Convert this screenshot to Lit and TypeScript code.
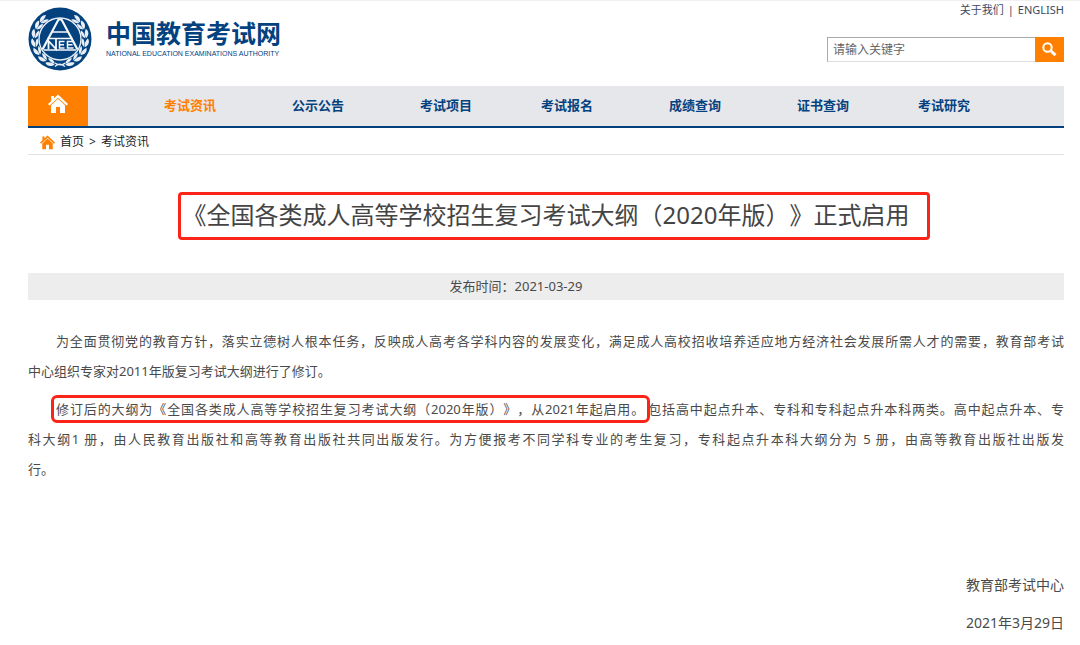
import { LitElement, html, css, svg } from "lit";
import { customElement } from "lit/decorators.js";

interface NavItem {
  label: string;
  active?: boolean;
}

const NAV: NavItem[] = [
  { label: "考试资讯", active: true },
  { label: "公示公告" },
  { label: "考试项目" },
  { label: "考试报名" },
  { label: "成绩查询" },
  { label: "证书查询" },
  { label: "考试研究" },
];

const LEAF_ANGLES = [14, 34, 54, 74, 94, 114, 132];

@customElement("site-emblem")
export class SiteEmblem extends LitElement {
  static styles = css`
    :host {
      display: block;
      width: 64px;
      height: 64px;
    }
    svg {
      display: block;
      width: 100%;
      height: 100%;
    }
  `;

  private branch() {
    return LEAF_ANGLES.map(
      (angle) => svg`<g transform="rotate(${angle} 32 32)">
        <path d="M33 58 C30 61.500 26 61.500 23.500 58.500 C27 56.800 30 56.600 33 58 Z"></path>
        <path d="M33 57.200 C31 53.600 28 52.800 25 53.600 C27 56.400 30 57.200 33 57.200 Z"></path>
      </g>`
    );
  }

  render() {
    return html`<svg viewBox="0 0 64 64" aria-hidden="true">
      <circle cx="32" cy="32" r="31.5" fill="#04427f"></circle>
      <g fill="#e8eff6">
        <g>${this.branch()}</g>
        <g transform="translate(64 0) scale(-1 1)">${this.branch()}</g>
      </g>
      <path d="M27 59.500 Q31 55 37 59.500 M37 56 Q33 60 27 56" stroke="#e8eff6" stroke-width="1.200" fill="none"></path>
      <circle cx="32" cy="32" r="21" fill="#04427f" stroke="#e8eff6" stroke-width="1.400"></circle>
      <g fill="none" stroke="#f4f8fb">
        <path d="M14.500 42.500 L30.500 12.500 H33.500 L49.500 42.500" stroke-width="2.200"></path>
        <path d="M24 25 H40 M19.500 31.500 H44.500 M16 43 H48" stroke-width="1.300"></path>
        <path d="M20.500 42 V34 L28 42 V32" stroke-width="1.800"></path>
        <path d="M36.500 34.500 H31.500 V41 H36.500 M31.500 37.700 H36 M45 34.500 H39.500 V41 H45.500 M39.500 37.700 H44.500" stroke-width="1.500"></path>
      </g>
    </svg>`;
  }
}

@customElement("app-root")
export class AppRoot extends LitElement {
  static styles = css`
    :host {
      display: block;
      border-top: 1px solid #f0f0f0;
      background: #fff;
      color: #4a4a4a;
      font-family: "Noto Sans", "Noto Sans CJK SC", sans-serif;
      font-size: 13px;
      text-spacing-trim: space-all;
    }
    * {
      box-sizing: border-box;
    }
    a {
      color: inherit;
      text-decoration: none;
    }
    .page {
      padding: 0 16px 0 28px;
    }
    .header {
      display: flex;
      justify-content: space-between;
      height: 85px;
    }
    .brand {
      display: flex;
      align-items: flex-start;
      gap: 14px;
      padding-top: 6px;
      color: #04427f;
    }
    .brand-text {
      display: flex;
      flex-direction: column;
      padding-top: 8px;
    }
    .brand-name {
      font-family: "Noto Sans CJK SC", sans-serif;
      font-size: 25px;
      font-weight: 700;
      line-height: 34px;
    }
    .brand-sub {
      font-family: "Liberation Sans", sans-serif;
      font-size: 7px;
      line-height: 10px;
      white-space: nowrap;
    }
    .tools {
      display: flex;
      flex-direction: column;
      align-items: flex-end;
      gap: 18px;
    }
    .links {
      display: flex;
      gap: 4px;
      font-size: 11px;
      line-height: 18px;
      color: #3d4a63;
    }
    .search {
      display: flex;
      height: 25px;
    }
    .search input {
      width: 208px;
      margin: 0;
      padding: 0 5px;
      border: 1px solid #ddd;
      border-top-color: #aaa;
      border-left-color: #aaa;
      border-right: 0;
      border-radius: 0;
      outline: none;
      font: inherit;
      font-size: 12px;
      color: #555;
    }
    .search input::placeholder {
      color: #666;
      opacity: 1;
    }
    .search button {
      display: flex;
      align-items: center;
      justify-content: center;
      width: 29px;
      padding: 0;
      border: 0;
      background: #ff8000;
    }
    .nav {
      display: flex;
      height: 42px;
      border-bottom: 2px solid #04427f;
      background: #e6e7ea;
    }
    .home {
      display: flex;
      align-items: center;
      justify-content: center;
      width: 60px;
      padding-bottom: 4px;
      background: #ff8000;
    }
    .menu {
      display: flex;
      margin: 0;
      padding: 0;
      list-style: none;
      font-weight: 700;
      line-height: 38px;
      color: #04427f;
    }
    .menu li {
      margin-left: 76px;
      white-space: nowrap;
    }
    .menu li:nth-child(3n + 4) {
      margin-left: 69px;
    }
    .menu .active {
      color: #ff8000;
    }
    .crumbs {
      display: flex;
      align-items: center;
      gap: 5px;
      height: 27px;
      padding-left: 12px;
      border-bottom: 1px solid #e2e2e2;
      font-size: 12px;
      color: #222;
    }
    .crumbs svg {
      margin-top: 2px;
    }
    .title {
      margin: 40px 0 0;
      text-align: center;
      font-size: 24px;
      font-weight: 400;
      line-height: 40px;
      color: #444;
    }
    .title-mark {
      position: relative;
      display: inline-block;
    }
    .title-mark::after {
      content: "";
      position: absolute;
      inset: -3px -21px -5px -5px;
      border: 3px solid #fb2418;
      border-radius: 4px;
    }
    .meta {
      margin-top: 38px;
      padding-right: 60px;
      background: #ededed;
      text-align: center;
      line-height: 27px;
    }
    .article {
      padding-top: 26px;
      line-height: 30px;
    }
    .article p {
      margin: 0 0 8px;
      text-indent: 28px;
    }
    .line {
      display: block;
      text-align: justify;
      text-align-last: justify;
    }
    .line + .line,
    .rest {
      display: block;
      text-indent: 0;
    }
    .mark {
      margin-right: 3px;
      border-radius: 1px;
      outline: 3px solid #fb2418;
      outline-offset: 2px;
    }
    .sign {
      padding-top: 78px;
      font-size: 14px;
      line-height: 30px;
      text-align: right;
    }
    .sign p {
      margin: 0 0 8px;
    }
  `;

  private house(size: number, color: string) {
    return html`<svg width=${size} height=${size} viewBox="0 0 20 20" fill=${color} aria-hidden="true">
      <path d="M10 0.500 L20 10 L18.500 11.600 L10 3.800 L1.500 11.600 L0 10 L3.200 7 V2 H6 V4.300 Z"></path>
      <path d="M10 4.800 L17 11.200 V19 H12 V13 H8 V19 H3 V11.200 Z"></path>
    </svg>`;
  }

  render() {
    return html`
      <div class="page">
        <header class="header">
          <a class="brand" href="#">
            <site-emblem></site-emblem>
            <span class="brand-text">
              <span class="brand-name">中国教育考试网</span>
              <span class="brand-sub">NATIONAL EDUCATION EXAMINATIONS AUTHORITY</span>
            </span>
          </a>
          <div class="tools">
            <div class="links">
              <a href="#">关于我们</a><span>|</span><a href="#">ENGLISH</a>
            </div>
            <form class="search" @submit=${(e: Event) => e.preventDefault()}>
              <input type="text" aria-label="请输入关键字" placeholder="请输入关键字" />
              <button type="submit" aria-label="搜索">
                <svg width="15" height="15" viewBox="0 0 15 15" fill="none" stroke="#fff" aria-hidden="true">
                  <circle cx="5.500" cy="5.500" r="4.200" stroke-width="2"></circle>
                  <path d="M9 9 L13.500 13.200" stroke-width="3"></path>
                </svg>
              </button>
            </form>
          </div>
        </header>

        <nav class="nav">
          <a class="home" href="#" aria-label="首页">${this.house(20, "#fff")}</a>
          <ul class="menu">
            ${NAV.map(
              (item) => html`<li><a class=${item.active ? "active" : ""} href="#">${item.label}</a></li>`
            )}
          </ul>
        </nav>

        <div class="crumbs">
          ${this.house(15, "#ff8000")}
          <a href="#">首页</a><span>&gt;</span><a href="#">考试资讯</a>
        </div>

        <main>
          <h1 class="title">
            <span class="title-mark">《全国各类成人高等学校招生复习考试大纲（2020年版）》正式启用</span>
          </h1>
          <div class="meta">发布时间：2021-03-29</div>
          <div class="article">
            <p>
              <span class="line">为全面贯彻党的教育方针，落实立德树人根本任务，反映成人高考各学科内容的发展变化，满足成人高校招收培养适应地方经济社会发展所需人才的需要，教育部考试</span>
              <span class="rest">中心组织专家对2011年版复习考试大纲进行了修订。</span>
            </p>
            <p>
              <span class="line"><span class="mark">修订后的大纲为《全国各类成人高等学校招生复习考试大纲（2020年版）》，从2021年起启用。</span>包括高中起点升本、专科和专科起点升本科两类。高中起点升本、专</span>
              <span class="line">科大纲1 册，由人民教育出版社和高等教育出版社共同出版发行。为方便报考不同学科专业的考生复习，专科起点升本科大纲分为 5 册，由高等教育出版社出版发</span>
              <span class="rest">行。</span>
            </p>
          </div>
          <div class="sign">
            <p>教育部考试中心</p>
            <p>2021年3月29日</p>
          </div>
        </main>
      </div>
    `;
  }
}
